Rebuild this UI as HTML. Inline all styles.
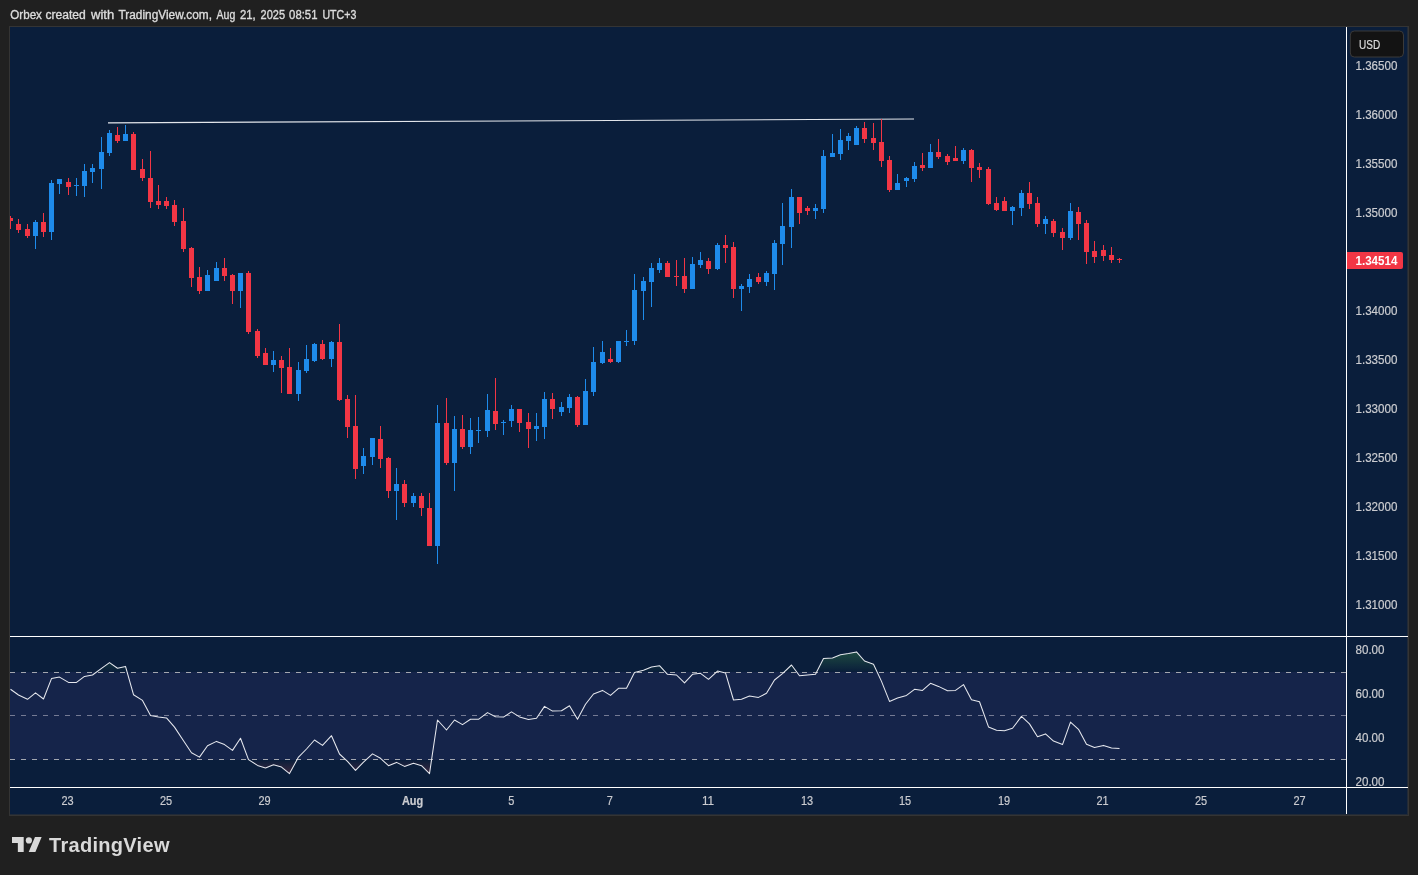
<!DOCTYPE html>
<html><head><meta charset="utf-8"><title>Chart</title>
<style>
html,body{margin:0;padding:0;background:#202020;}
body{width:1418px;height:875px;position:relative;overflow:hidden;font-family:"Liberation Sans",sans-serif;}
#hdr{position:absolute;left:10px;top:8px;font-size:12px;line-height:15px;color:#d6d6d6;white-space:nowrap;letter-spacing:0px;}
#frame{position:absolute;left:9px;top:26px;width:1400px;height:790px;box-sizing:border-box;background:#0a1e3b;border:1px solid #343434;box-shadow:inset -1px -1px 0 rgba(52,52,52,0.55);}
svg{position:absolute;left:0;top:0;will-change:transform;}
#hdr,#logo{will-change:transform;}
.ax{font-family:"Liberation Sans",sans-serif;font-size:11.6px;fill:#cbccd0;stroke:#cbccd0;stroke-width:0.2px;}
#logo{position:absolute;left:49px;top:833px;font-size:20px;line-height:24px;font-weight:bold;color:#d9d9d9;white-space:nowrap;letter-spacing:0.3px;}
</style></head><body>
<div id="frame"></div>
<svg width="1418" height="875" viewBox="0 0 1418 875">
<defs>
<linearGradient id="gob" gradientUnits="userSpaceOnUse" x1="0" y1="606" x2="0" y2="672"><stop offset="0" stop-color="#4caf50" stop-opacity="1"/><stop offset="1" stop-color="#4caf50" stop-opacity="0"/></linearGradient>
<linearGradient id="gos" gradientUnits="userSpaceOnUse" x1="0" y1="760" x2="0" y2="826"><stop offset="0" stop-color="#ff5252" stop-opacity="0"/><stop offset="1" stop-color="#ff5252" stop-opacity="1"/></linearGradient>
<clipPath id="ctop"><rect x="10" y="637" width="1336" height="35"/></clipPath>
<clipPath id="cbot"><rect x="10" y="760" width="1336" height="27"/></clipPath>
</defs>
<g shape-rendering="crispEdges">
<rect x="10" y="672" width="1336" height="88" fill="#15244a"/>
<g stroke="#a4a7b0" stroke-width="1" stroke-dasharray="5 6">
<line x1="10" y1="672.5" x2="1346" y2="672.5"/>
<line x1="10" y1="715.5" x2="1346" y2="715.5" stroke="#757b94"/>
<line x1="10" y1="759.5" x2="1346" y2="759.5"/>
</g>
</g>
<polygon points="10.5,672 10.5,689.3 18.5,695.0 27.5,699.3 35.5,692.9 43.5,699.0 51.5,678.6 59.5,677.1 68.5,682.4 76.5,682.4 84.5,676.4 92.5,675.0 101.5,668.3 109.5,662.6 117.5,668.3 125.5,666.4 133.5,694.7 142.5,700.4 150.5,715.4 158.5,717.1 166.5,717.9 174.5,727.1 183.5,740.7 191.5,752.7 199.5,757.1 207.5,745.7 216.5,741.4 224.5,744.6 232.5,750.4 240.5,738.3 248.5,759.6 257.5,765.4 265.5,767.9 273.5,764.7 281.5,767.1 289.5,773.6 298.5,757.1 306.5,749.0 314.5,740.0 322.5,745.4 331.5,735.7 339.5,754.0 347.5,761.4 355.5,770.4 363.5,762.1 372.5,753.9 380.5,758.3 388.5,765.7 396.5,762.4 404.5,766.4 413.5,763.3 421.5,765.7 429.5,773.6 437.5,720.0 446.5,730.0 454.5,720.0 462.5,724.6 470.5,719.3 478.5,719.3 487.5,712.6 495.5,716.7 503.5,717.1 511.5,711.9 519.5,716.9 528.5,719.6 536.5,718.3 544.5,706.4 552.5,711.1 561.5,710.7 569.5,705.7 577.5,719.3 585.5,704.3 593.5,694.0 602.5,690.4 610.5,695.4 618.5,688.3 626.5,688.3 634.5,672.6 643.5,670.3 651.5,666.9 659.5,665.7 667.5,674.3 676.5,675.0 684.5,682.9 692.5,674.3 700.5,673.3 708.5,679.3 717.5,671.1 725.5,672.9 733.5,700.0 741.5,699.3 749.5,696.0 758.5,697.4 766.5,693.3 774.5,680.0 782.5,673.6 791.5,665.0 799.5,675.7 807.5,675.0 815.5,674.3 823.5,658.6 832.5,657.9 840.5,654.7 848.5,653.6 856.5,651.9 864.5,661.0 873.5,664.3 881.5,681.4 889.5,701.4 897.5,697.9 906.5,695.4 914.5,689.3 922.5,690.4 930.5,683.3 938.5,686.4 947.5,690.7 955.5,690.4 963.5,684.6 971.5,699.7 979.5,701.7 988.5,726.9 996.5,730.3 1004.5,730.7 1012.5,728.3 1021.5,716.4 1029.5,723.9 1037.5,736.7 1045.5,733.9 1053.5,741.1 1062.5,744.6 1070.5,722.1 1078.5,729.3 1086.5,744.3 1094.5,747.4 1103.5,745.4 1111.5,747.9 1119.5,748.6 1119.5,672" fill="url(#gob)" clip-path="url(#ctop)"/>
<polygon points="10.5,760 10.5,689.3 18.5,695.0 27.5,699.3 35.5,692.9 43.5,699.0 51.5,678.6 59.5,677.1 68.5,682.4 76.5,682.4 84.5,676.4 92.5,675.0 101.5,668.3 109.5,662.6 117.5,668.3 125.5,666.4 133.5,694.7 142.5,700.4 150.5,715.4 158.5,717.1 166.5,717.9 174.5,727.1 183.5,740.7 191.5,752.7 199.5,757.1 207.5,745.7 216.5,741.4 224.5,744.6 232.5,750.4 240.5,738.3 248.5,759.6 257.5,765.4 265.5,767.9 273.5,764.7 281.5,767.1 289.5,773.6 298.5,757.1 306.5,749.0 314.5,740.0 322.5,745.4 331.5,735.7 339.5,754.0 347.5,761.4 355.5,770.4 363.5,762.1 372.5,753.9 380.5,758.3 388.5,765.7 396.5,762.4 404.5,766.4 413.5,763.3 421.5,765.7 429.5,773.6 437.5,720.0 446.5,730.0 454.5,720.0 462.5,724.6 470.5,719.3 478.5,719.3 487.5,712.6 495.5,716.7 503.5,717.1 511.5,711.9 519.5,716.9 528.5,719.6 536.5,718.3 544.5,706.4 552.5,711.1 561.5,710.7 569.5,705.7 577.5,719.3 585.5,704.3 593.5,694.0 602.5,690.4 610.5,695.4 618.5,688.3 626.5,688.3 634.5,672.6 643.5,670.3 651.5,666.9 659.5,665.7 667.5,674.3 676.5,675.0 684.5,682.9 692.5,674.3 700.5,673.3 708.5,679.3 717.5,671.1 725.5,672.9 733.5,700.0 741.5,699.3 749.5,696.0 758.5,697.4 766.5,693.3 774.5,680.0 782.5,673.6 791.5,665.0 799.5,675.7 807.5,675.0 815.5,674.3 823.5,658.6 832.5,657.9 840.5,654.7 848.5,653.6 856.5,651.9 864.5,661.0 873.5,664.3 881.5,681.4 889.5,701.4 897.5,697.9 906.5,695.4 914.5,689.3 922.5,690.4 930.5,683.3 938.5,686.4 947.5,690.7 955.5,690.4 963.5,684.6 971.5,699.7 979.5,701.7 988.5,726.9 996.5,730.3 1004.5,730.7 1012.5,728.3 1021.5,716.4 1029.5,723.9 1037.5,736.7 1045.5,733.9 1053.5,741.1 1062.5,744.6 1070.5,722.1 1078.5,729.3 1086.5,744.3 1094.5,747.4 1103.5,745.4 1111.5,747.9 1119.5,748.6 1119.5,760" fill="url(#gos)" clip-path="url(#cbot)"/>
<polyline points="10.5,689.3 18.5,695.0 27.5,699.3 35.5,692.9 43.5,699.0 51.5,678.6 59.5,677.1 68.5,682.4 76.5,682.4 84.5,676.4 92.5,675.0 101.5,668.3 109.5,662.6 117.5,668.3 125.5,666.4 133.5,694.7 142.5,700.4 150.5,715.4 158.5,717.1 166.5,717.9 174.5,727.1 183.5,740.7 191.5,752.7 199.5,757.1 207.5,745.7 216.5,741.4 224.5,744.6 232.5,750.4 240.5,738.3 248.5,759.6 257.5,765.4 265.5,767.9 273.5,764.7 281.5,767.1 289.5,773.6 298.5,757.1 306.5,749.0 314.5,740.0 322.5,745.4 331.5,735.7 339.5,754.0 347.5,761.4 355.5,770.4 363.5,762.1 372.5,753.9 380.5,758.3 388.5,765.7 396.5,762.4 404.5,766.4 413.5,763.3 421.5,765.7 429.5,773.6 437.5,720.0 446.5,730.0 454.5,720.0 462.5,724.6 470.5,719.3 478.5,719.3 487.5,712.6 495.5,716.7 503.5,717.1 511.5,711.9 519.5,716.9 528.5,719.6 536.5,718.3 544.5,706.4 552.5,711.1 561.5,710.7 569.5,705.7 577.5,719.3 585.5,704.3 593.5,694.0 602.5,690.4 610.5,695.4 618.5,688.3 626.5,688.3 634.5,672.6 643.5,670.3 651.5,666.9 659.5,665.7 667.5,674.3 676.5,675.0 684.5,682.9 692.5,674.3 700.5,673.3 708.5,679.3 717.5,671.1 725.5,672.9 733.5,700.0 741.5,699.3 749.5,696.0 758.5,697.4 766.5,693.3 774.5,680.0 782.5,673.6 791.5,665.0 799.5,675.7 807.5,675.0 815.5,674.3 823.5,658.6 832.5,657.9 840.5,654.7 848.5,653.6 856.5,651.9 864.5,661.0 873.5,664.3 881.5,681.4 889.5,701.4 897.5,697.9 906.5,695.4 914.5,689.3 922.5,690.4 930.5,683.3 938.5,686.4 947.5,690.7 955.5,690.4 963.5,684.6 971.5,699.7 979.5,701.7 988.5,726.9 996.5,730.3 1004.5,730.7 1012.5,728.3 1021.5,716.4 1029.5,723.9 1037.5,736.7 1045.5,733.9 1053.5,741.1 1062.5,744.6 1070.5,722.1 1078.5,729.3 1086.5,744.3 1094.5,747.4 1103.5,745.4 1111.5,747.9 1119.5,748.6" fill="none" stroke="#e6e8ee" stroke-width="1.05" stroke-linejoin="round"/>
<line x1="108" y1="122.9" x2="914" y2="119" stroke="#e3e6eb" stroke-width="1.15"/>
<g shape-rendering="crispEdges">
<rect x="10" y="216" width="1" height="13" fill="#f23645"/>
<rect x="10" y="218" width="3" height="3" fill="#f23645"/>
<rect x="18" y="219" width="1" height="14" fill="#f23645"/>
<rect x="16" y="224" width="5" height="6" fill="#f23645"/>
<rect x="27" y="224" width="1" height="14" fill="#f23645"/>
<rect x="25" y="229" width="5" height="7" fill="#f23645"/>
<rect x="35" y="220" width="1" height="29" fill="#1e8beb"/>
<rect x="33" y="222" width="5" height="14" fill="#1e8beb"/>
<rect x="43" y="213" width="1" height="24" fill="#f23645"/>
<rect x="41" y="222" width="5" height="10" fill="#f23645"/>
<rect x="51" y="180" width="1" height="60" fill="#1e8beb"/>
<rect x="49" y="183" width="5" height="49" fill="#1e8beb"/>
<rect x="59" y="179" width="1" height="15" fill="#1e8beb"/>
<rect x="57" y="179" width="5" height="5" fill="#1e8beb"/>
<rect x="68" y="178" width="1" height="17" fill="#f23645"/>
<rect x="66" y="182" width="5" height="5" fill="#f23645"/>
<rect x="76" y="178" width="1" height="18" fill="#1e8beb"/>
<rect x="74" y="185" width="5" height="1" fill="#1e8beb"/>
<rect x="84" y="164" width="1" height="33" fill="#1e8beb"/>
<rect x="82" y="171" width="5" height="15" fill="#1e8beb"/>
<rect x="92" y="164" width="1" height="19" fill="#1e8beb"/>
<rect x="90" y="168" width="5" height="4" fill="#1e8beb"/>
<rect x="101" y="137" width="1" height="52" fill="#1e8beb"/>
<rect x="99" y="152" width="5" height="17" fill="#1e8beb"/>
<rect x="109" y="130" width="1" height="26" fill="#1e8beb"/>
<rect x="107" y="133" width="5" height="20" fill="#1e8beb"/>
<rect x="117" y="127" width="1" height="16" fill="#f23645"/>
<rect x="115" y="135" width="5" height="6" fill="#f23645"/>
<rect x="125" y="125" width="1" height="16" fill="#1e8beb"/>
<rect x="123" y="134" width="5" height="7" fill="#1e8beb"/>
<rect x="133" y="132" width="1" height="38" fill="#f23645"/>
<rect x="131" y="134" width="5" height="36" fill="#f23645"/>
<rect x="142" y="159" width="1" height="22" fill="#f23645"/>
<rect x="140" y="169" width="5" height="9" fill="#f23645"/>
<rect x="150" y="151" width="1" height="57" fill="#f23645"/>
<rect x="148" y="178" width="5" height="24" fill="#f23645"/>
<rect x="158" y="185" width="1" height="24" fill="#f23645"/>
<rect x="156" y="201" width="5" height="4" fill="#f23645"/>
<rect x="166" y="197" width="1" height="12" fill="#f23645"/>
<rect x="164" y="201" width="5" height="5" fill="#f23645"/>
<rect x="174" y="200" width="1" height="26" fill="#f23645"/>
<rect x="172" y="205" width="5" height="17" fill="#f23645"/>
<rect x="183" y="208" width="1" height="44" fill="#f23645"/>
<rect x="181" y="221" width="5" height="28" fill="#f23645"/>
<rect x="191" y="247" width="1" height="40" fill="#f23645"/>
<rect x="189" y="248" width="5" height="30" fill="#f23645"/>
<rect x="199" y="267" width="1" height="27" fill="#f23645"/>
<rect x="197" y="277" width="5" height="14" fill="#f23645"/>
<rect x="207" y="270" width="1" height="21" fill="#1e8beb"/>
<rect x="205" y="275" width="5" height="16" fill="#1e8beb"/>
<rect x="216" y="262" width="1" height="19" fill="#1e8beb"/>
<rect x="214" y="268" width="5" height="13" fill="#1e8beb"/>
<rect x="224" y="258" width="1" height="23" fill="#f23645"/>
<rect x="222" y="268" width="5" height="8" fill="#f23645"/>
<rect x="232" y="274" width="1" height="30" fill="#f23645"/>
<rect x="230" y="275" width="5" height="16" fill="#f23645"/>
<rect x="240" y="273" width="1" height="35" fill="#1e8beb"/>
<rect x="238" y="273" width="5" height="18" fill="#1e8beb"/>
<rect x="248" y="271" width="1" height="63" fill="#f23645"/>
<rect x="246" y="273" width="5" height="59" fill="#f23645"/>
<rect x="257" y="329" width="1" height="29" fill="#f23645"/>
<rect x="255" y="331" width="5" height="25" fill="#f23645"/>
<rect x="265" y="348" width="1" height="17" fill="#f23645"/>
<rect x="263" y="353" width="5" height="12" fill="#f23645"/>
<rect x="273" y="351" width="1" height="21" fill="#1e8beb"/>
<rect x="271" y="360" width="5" height="5" fill="#1e8beb"/>
<rect x="281" y="356" width="1" height="37" fill="#f23645"/>
<rect x="279" y="360" width="5" height="8" fill="#f23645"/>
<rect x="289" y="348" width="1" height="46" fill="#f23645"/>
<rect x="287" y="367" width="5" height="27" fill="#f23645"/>
<rect x="298" y="362" width="1" height="39" fill="#1e8beb"/>
<rect x="296" y="370" width="5" height="24" fill="#1e8beb"/>
<rect x="306" y="345" width="1" height="28" fill="#1e8beb"/>
<rect x="304" y="359" width="5" height="12" fill="#1e8beb"/>
<rect x="314" y="343" width="1" height="19" fill="#1e8beb"/>
<rect x="312" y="344" width="5" height="17" fill="#1e8beb"/>
<rect x="322" y="340" width="1" height="20" fill="#f23645"/>
<rect x="320" y="344" width="5" height="15" fill="#f23645"/>
<rect x="331" y="341" width="1" height="26" fill="#1e8beb"/>
<rect x="329" y="342" width="5" height="17" fill="#1e8beb"/>
<rect x="339" y="324" width="1" height="77" fill="#f23645"/>
<rect x="337" y="342" width="5" height="58" fill="#f23645"/>
<rect x="347" y="395" width="1" height="43" fill="#f23645"/>
<rect x="345" y="399" width="5" height="28" fill="#f23645"/>
<rect x="355" y="395" width="1" height="84" fill="#f23645"/>
<rect x="353" y="426" width="5" height="43" fill="#f23645"/>
<rect x="363" y="448" width="1" height="26" fill="#1e8beb"/>
<rect x="361" y="456" width="5" height="10" fill="#1e8beb"/>
<rect x="372" y="438" width="1" height="27" fill="#1e8beb"/>
<rect x="370" y="438" width="5" height="19" fill="#1e8beb"/>
<rect x="380" y="426" width="1" height="42" fill="#f23645"/>
<rect x="378" y="439" width="5" height="20" fill="#f23645"/>
<rect x="388" y="457" width="1" height="41" fill="#f23645"/>
<rect x="386" y="458" width="5" height="33" fill="#f23645"/>
<rect x="396" y="468" width="1" height="52" fill="#1e8beb"/>
<rect x="394" y="484" width="5" height="7" fill="#1e8beb"/>
<rect x="404" y="480" width="1" height="27" fill="#f23645"/>
<rect x="402" y="484" width="5" height="19" fill="#f23645"/>
<rect x="413" y="493" width="1" height="14" fill="#1e8beb"/>
<rect x="411" y="496" width="5" height="7" fill="#1e8beb"/>
<rect x="421" y="493" width="1" height="23" fill="#f23645"/>
<rect x="419" y="496" width="5" height="12" fill="#f23645"/>
<rect x="429" y="493" width="1" height="53" fill="#f23645"/>
<rect x="427" y="508" width="5" height="38" fill="#f23645"/>
<rect x="437" y="405" width="1" height="159" fill="#1e8beb"/>
<rect x="435" y="423" width="5" height="123" fill="#1e8beb"/>
<rect x="446" y="398" width="1" height="67" fill="#f23645"/>
<rect x="444" y="423" width="5" height="40" fill="#f23645"/>
<rect x="454" y="416" width="1" height="75" fill="#1e8beb"/>
<rect x="452" y="429" width="5" height="34" fill="#1e8beb"/>
<rect x="462" y="415" width="1" height="34" fill="#f23645"/>
<rect x="460" y="429" width="5" height="18" fill="#f23645"/>
<rect x="470" y="418" width="1" height="36" fill="#1e8beb"/>
<rect x="468" y="430" width="5" height="17" fill="#1e8beb"/>
<rect x="478" y="417" width="1" height="26" fill="#1e8beb"/>
<rect x="476" y="430" width="5" height="1" fill="#1e8beb"/>
<rect x="487" y="394" width="1" height="43" fill="#1e8beb"/>
<rect x="485" y="410" width="5" height="21" fill="#1e8beb"/>
<rect x="495" y="378" width="1" height="52" fill="#f23645"/>
<rect x="493" y="411" width="5" height="13" fill="#f23645"/>
<rect x="503" y="420" width="1" height="15" fill="#1e8beb"/>
<rect x="501" y="422" width="5" height="1" fill="#1e8beb"/>
<rect x="511" y="405" width="1" height="22" fill="#1e8beb"/>
<rect x="509" y="409" width="5" height="12" fill="#1e8beb"/>
<rect x="519" y="409" width="1" height="23" fill="#f23645"/>
<rect x="517" y="409" width="5" height="14" fill="#f23645"/>
<rect x="528" y="413" width="1" height="35" fill="#f23645"/>
<rect x="526" y="422" width="5" height="7" fill="#f23645"/>
<rect x="536" y="413" width="1" height="28" fill="#1e8beb"/>
<rect x="534" y="426" width="5" height="3" fill="#1e8beb"/>
<rect x="544" y="392" width="1" height="47" fill="#1e8beb"/>
<rect x="542" y="399" width="5" height="28" fill="#1e8beb"/>
<rect x="552" y="393" width="1" height="26" fill="#f23645"/>
<rect x="550" y="399" width="5" height="10" fill="#f23645"/>
<rect x="561" y="402" width="1" height="14" fill="#1e8beb"/>
<rect x="559" y="407" width="5" height="5" fill="#1e8beb"/>
<rect x="569" y="394" width="1" height="19" fill="#1e8beb"/>
<rect x="567" y="397" width="5" height="11" fill="#1e8beb"/>
<rect x="577" y="396" width="1" height="31" fill="#f23645"/>
<rect x="575" y="397" width="5" height="28" fill="#f23645"/>
<rect x="585" y="379" width="1" height="46" fill="#1e8beb"/>
<rect x="583" y="391" width="5" height="34" fill="#1e8beb"/>
<rect x="593" y="347" width="1" height="49" fill="#1e8beb"/>
<rect x="591" y="362" width="5" height="30" fill="#1e8beb"/>
<rect x="602" y="341" width="1" height="23" fill="#1e8beb"/>
<rect x="600" y="352" width="5" height="11" fill="#1e8beb"/>
<rect x="610" y="348" width="1" height="15" fill="#f23645"/>
<rect x="608" y="359" width="5" height="3" fill="#f23645"/>
<rect x="618" y="341" width="1" height="22" fill="#1e8beb"/>
<rect x="616" y="341" width="5" height="21" fill="#1e8beb"/>
<rect x="626" y="330" width="1" height="16" fill="#1e8beb"/>
<rect x="624" y="341" width="5" height="1" fill="#1e8beb"/>
<rect x="634" y="274" width="1" height="71" fill="#1e8beb"/>
<rect x="632" y="290" width="5" height="51" fill="#1e8beb"/>
<rect x="643" y="277" width="1" height="43" fill="#1e8beb"/>
<rect x="641" y="281" width="5" height="10" fill="#1e8beb"/>
<rect x="651" y="263" width="1" height="44" fill="#1e8beb"/>
<rect x="649" y="268" width="5" height="14" fill="#1e8beb"/>
<rect x="659" y="258" width="1" height="15" fill="#1e8beb"/>
<rect x="657" y="263" width="5" height="7" fill="#1e8beb"/>
<rect x="667" y="261" width="1" height="16" fill="#f23645"/>
<rect x="665" y="263" width="5" height="14" fill="#f23645"/>
<rect x="676" y="260" width="1" height="26" fill="#f23645"/>
<rect x="674" y="276" width="5" height="1" fill="#f23645"/>
<rect x="684" y="258" width="1" height="35" fill="#f23645"/>
<rect x="682" y="276" width="5" height="13" fill="#f23645"/>
<rect x="692" y="257" width="1" height="32" fill="#1e8beb"/>
<rect x="690" y="264" width="5" height="25" fill="#1e8beb"/>
<rect x="700" y="252" width="1" height="16" fill="#1e8beb"/>
<rect x="698" y="260" width="5" height="5" fill="#1e8beb"/>
<rect x="708" y="258" width="1" height="16" fill="#f23645"/>
<rect x="706" y="261" width="5" height="8" fill="#f23645"/>
<rect x="717" y="243" width="1" height="27" fill="#1e8beb"/>
<rect x="715" y="245" width="5" height="24" fill="#1e8beb"/>
<rect x="725" y="235" width="1" height="28" fill="#f23645"/>
<rect x="723" y="245" width="5" height="3" fill="#f23645"/>
<rect x="733" y="242" width="1" height="56" fill="#f23645"/>
<rect x="731" y="247" width="5" height="42" fill="#f23645"/>
<rect x="741" y="284" width="1" height="27" fill="#1e8beb"/>
<rect x="739" y="286" width="5" height="3" fill="#1e8beb"/>
<rect x="749" y="274" width="1" height="19" fill="#1e8beb"/>
<rect x="747" y="279" width="5" height="8" fill="#1e8beb"/>
<rect x="758" y="273" width="1" height="11" fill="#f23645"/>
<rect x="756" y="277" width="5" height="5" fill="#f23645"/>
<rect x="766" y="271" width="1" height="15" fill="#1e8beb"/>
<rect x="764" y="273" width="5" height="9" fill="#1e8beb"/>
<rect x="774" y="240" width="1" height="50" fill="#1e8beb"/>
<rect x="772" y="243" width="5" height="31" fill="#1e8beb"/>
<rect x="782" y="203" width="1" height="62" fill="#1e8beb"/>
<rect x="780" y="226" width="5" height="18" fill="#1e8beb"/>
<rect x="791" y="189" width="1" height="59" fill="#1e8beb"/>
<rect x="789" y="197" width="5" height="30" fill="#1e8beb"/>
<rect x="799" y="197" width="1" height="27" fill="#f23645"/>
<rect x="797" y="197" width="5" height="16" fill="#f23645"/>
<rect x="807" y="206" width="1" height="9" fill="#f23645"/>
<rect x="805" y="208" width="5" height="3" fill="#f23645"/>
<rect x="815" y="204" width="1" height="15" fill="#1e8beb"/>
<rect x="813" y="208" width="5" height="3" fill="#1e8beb"/>
<rect x="823" y="150" width="1" height="63" fill="#1e8beb"/>
<rect x="821" y="156" width="5" height="53" fill="#1e8beb"/>
<rect x="832" y="134" width="1" height="23" fill="#1e8beb"/>
<rect x="830" y="153" width="5" height="4" fill="#1e8beb"/>
<rect x="840" y="129" width="1" height="31" fill="#1e8beb"/>
<rect x="838" y="140" width="5" height="14" fill="#1e8beb"/>
<rect x="848" y="133" width="1" height="17" fill="#1e8beb"/>
<rect x="846" y="136" width="5" height="5" fill="#1e8beb"/>
<rect x="856" y="126" width="1" height="19" fill="#1e8beb"/>
<rect x="854" y="128" width="5" height="17" fill="#1e8beb"/>
<rect x="864" y="122" width="1" height="21" fill="#f23645"/>
<rect x="862" y="128" width="5" height="11" fill="#f23645"/>
<rect x="873" y="123" width="1" height="27" fill="#f23645"/>
<rect x="871" y="138" width="5" height="5" fill="#f23645"/>
<rect x="881" y="119" width="1" height="48" fill="#f23645"/>
<rect x="879" y="142" width="5" height="19" fill="#f23645"/>
<rect x="889" y="156" width="1" height="36" fill="#f23645"/>
<rect x="887" y="160" width="5" height="30" fill="#f23645"/>
<rect x="897" y="174" width="1" height="16" fill="#1e8beb"/>
<rect x="895" y="183" width="5" height="7" fill="#1e8beb"/>
<rect x="906" y="177" width="1" height="10" fill="#1e8beb"/>
<rect x="904" y="178" width="5" height="3" fill="#1e8beb"/>
<rect x="914" y="162" width="1" height="20" fill="#1e8beb"/>
<rect x="912" y="166" width="5" height="13" fill="#1e8beb"/>
<rect x="922" y="153" width="1" height="18" fill="#f23645"/>
<rect x="920" y="165" width="5" height="3" fill="#f23645"/>
<rect x="930" y="144" width="1" height="24" fill="#1e8beb"/>
<rect x="928" y="152" width="5" height="16" fill="#1e8beb"/>
<rect x="938" y="139" width="1" height="20" fill="#f23645"/>
<rect x="936" y="152" width="5" height="5" fill="#f23645"/>
<rect x="947" y="154" width="1" height="11" fill="#f23645"/>
<rect x="945" y="156" width="5" height="6" fill="#f23645"/>
<rect x="955" y="146" width="1" height="15" fill="#f23645"/>
<rect x="953" y="158" width="5" height="3" fill="#f23645"/>
<rect x="963" y="148" width="1" height="16" fill="#1e8beb"/>
<rect x="961" y="150" width="5" height="11" fill="#1e8beb"/>
<rect x="971" y="149" width="1" height="33" fill="#f23645"/>
<rect x="969" y="150" width="5" height="18" fill="#f23645"/>
<rect x="979" y="163" width="1" height="15" fill="#f23645"/>
<rect x="977" y="167" width="5" height="3" fill="#f23645"/>
<rect x="988" y="167" width="1" height="38" fill="#f23645"/>
<rect x="986" y="169" width="5" height="35" fill="#f23645"/>
<rect x="996" y="197" width="1" height="14" fill="#f23645"/>
<rect x="994" y="203" width="5" height="7" fill="#f23645"/>
<rect x="1004" y="197" width="1" height="14" fill="#f23645"/>
<rect x="1002" y="201" width="5" height="10" fill="#f23645"/>
<rect x="1012" y="206" width="1" height="19" fill="#1e8beb"/>
<rect x="1010" y="207" width="5" height="4" fill="#1e8beb"/>
<rect x="1021" y="190" width="1" height="26" fill="#1e8beb"/>
<rect x="1019" y="193" width="5" height="15" fill="#1e8beb"/>
<rect x="1029" y="182" width="1" height="27" fill="#f23645"/>
<rect x="1027" y="193" width="5" height="11" fill="#f23645"/>
<rect x="1037" y="197" width="1" height="30" fill="#f23645"/>
<rect x="1035" y="203" width="5" height="21" fill="#f23645"/>
<rect x="1045" y="216" width="1" height="18" fill="#1e8beb"/>
<rect x="1043" y="219" width="5" height="5" fill="#1e8beb"/>
<rect x="1053" y="219" width="1" height="18" fill="#f23645"/>
<rect x="1051" y="221" width="5" height="12" fill="#f23645"/>
<rect x="1062" y="228" width="1" height="22" fill="#f23645"/>
<rect x="1060" y="232" width="5" height="6" fill="#f23645"/>
<rect x="1070" y="203" width="1" height="37" fill="#1e8beb"/>
<rect x="1068" y="211" width="5" height="27" fill="#1e8beb"/>
<rect x="1078" y="207" width="1" height="33" fill="#f23645"/>
<rect x="1076" y="212" width="5" height="12" fill="#f23645"/>
<rect x="1086" y="220" width="1" height="44" fill="#f23645"/>
<rect x="1084" y="223" width="5" height="29" fill="#f23645"/>
<rect x="1094" y="241" width="1" height="22" fill="#f23645"/>
<rect x="1092" y="251" width="5" height="6" fill="#f23645"/>
<rect x="1103" y="245" width="1" height="16" fill="#f23645"/>
<rect x="1101" y="250" width="5" height="6" fill="#f23645"/>
<rect x="1111" y="247" width="1" height="16" fill="#f23645"/>
<rect x="1109" y="255" width="5" height="5" fill="#f23645"/>
<rect x="1119" y="258" width="1" height="5" fill="#f23645"/>
<rect x="1117" y="259" width="5" height="1" fill="#f23645"/>
<rect x="10" y="636" width="1398" height="1" fill="#ffffff"/>
<rect x="10" y="787" width="1398" height="1" fill="#ffffff"/>
<rect x="1346" y="27" width="1" height="787" fill="#ffffff"/>
</g>
<rect x="1350.3" y="31" width="53.2" height="26" rx="4" ry="4" fill="#131313" stroke="#3a3a3a" stroke-width="1"/>
<text x="1359" y="48.6" class="ax" style="fill:#dddddd;stroke:#dddddd;font-size:12.3px" textLength="21.2" lengthAdjust="spacingAndGlyphs">USD</text>
<text y="19" style="font-family:'Liberation Sans',sans-serif;font-size:12px;fill:#dcdcdc;stroke:#dcdcdc;stroke-width:0.35px"><tspan x="10.3" textLength="31.6" lengthAdjust="spacingAndGlyphs">Orbex</tspan> <tspan x="45.4" textLength="40.4" lengthAdjust="spacingAndGlyphs">created</tspan> <tspan x="91" textLength="23.2" lengthAdjust="spacingAndGlyphs">with</tspan> <tspan x="118.5" textLength="93.5" lengthAdjust="spacingAndGlyphs">TradingView.com,</tspan> <tspan x="216.6" textLength="18.7" lengthAdjust="spacingAndGlyphs">Aug</tspan> <tspan x="239.9" textLength="15.8" lengthAdjust="spacingAndGlyphs">21,</tspan> <tspan x="260.6" textLength="24.4" lengthAdjust="spacingAndGlyphs">2025</tspan> <tspan x="289.1" textLength="28.4" lengthAdjust="spacingAndGlyphs">08:51</tspan> <tspan x="322.4" textLength="33.9" lengthAdjust="spacingAndGlyphs">UTC+3</tspan></text>
<text x="1355.5" y="70.2" class="ax" style="font-size:12.9px" textLength="41.92" lengthAdjust="spacingAndGlyphs">1.36500</text><text x="1355.5" y="119.15" class="ax" style="font-size:12.9px" textLength="41.92" lengthAdjust="spacingAndGlyphs">1.36000</text><text x="1355.5" y="168.1" class="ax" style="font-size:12.9px" textLength="41.92" lengthAdjust="spacingAndGlyphs">1.35500</text><text x="1355.5" y="217.05" class="ax" style="font-size:12.9px" textLength="41.92" lengthAdjust="spacingAndGlyphs">1.35000</text><text x="1355.5" y="314.95" class="ax" style="font-size:12.9px" textLength="41.92" lengthAdjust="spacingAndGlyphs">1.34000</text><text x="1355.5" y="363.9" class="ax" style="font-size:12.9px" textLength="41.92" lengthAdjust="spacingAndGlyphs">1.33500</text><text x="1355.5" y="412.85" class="ax" style="font-size:12.9px" textLength="41.92" lengthAdjust="spacingAndGlyphs">1.33000</text><text x="1355.5" y="461.8" class="ax" style="font-size:12.9px" textLength="41.92" lengthAdjust="spacingAndGlyphs">1.32500</text><text x="1355.5" y="510.75" class="ax" style="font-size:12.9px" textLength="41.92" lengthAdjust="spacingAndGlyphs">1.32000</text><text x="1355.5" y="559.7" class="ax" style="font-size:12.9px" textLength="41.92" lengthAdjust="spacingAndGlyphs">1.31500</text><text x="1355.5" y="608.65" class="ax" style="font-size:12.9px" textLength="41.92" lengthAdjust="spacingAndGlyphs">1.31000</text><text x="1355.5" y="653.9" class="ax" style="font-size:12.9px" textLength="29.02" lengthAdjust="spacingAndGlyphs">80.00</text><text x="1355.5" y="697.9" class="ax" style="font-size:12.9px" textLength="29.02" lengthAdjust="spacingAndGlyphs">60.00</text><text x="1355.5" y="741.9" class="ax" style="font-size:12.9px" textLength="29.02" lengthAdjust="spacingAndGlyphs">40.00</text><text x="1355.5" y="785.9" class="ax" style="font-size:12.9px" textLength="29.02" lengthAdjust="spacingAndGlyphs">20.00</text><text x="61.41" y="805" class="ax" style="font-size:12.9px" textLength="12.19" lengthAdjust="spacingAndGlyphs">23</text><text x="159.91" y="805" class="ax" style="font-size:12.9px" textLength="12.19" lengthAdjust="spacingAndGlyphs">25</text><text x="258.4" y="805" class="ax" style="font-size:12.9px" textLength="12.19" lengthAdjust="spacingAndGlyphs">29</text><text x="401.95" y="804.9" class="ax" style="font-size:12px;font-weight:bold" textLength="21.3" lengthAdjust="spacingAndGlyphs">Aug</text><text x="508.25" y="805" class="ax" style="font-size:12.9px" textLength="6.1" lengthAdjust="spacingAndGlyphs">5</text><text x="606.75" y="805" class="ax" style="font-size:12.9px" textLength="6.1" lengthAdjust="spacingAndGlyphs">7</text><text x="701.9" y="805" class="ax" style="font-size:12.9px" textLength="12.19" lengthAdjust="spacingAndGlyphs">11</text><text x="800.9" y="805" class="ax" style="font-size:12.9px" textLength="12.19" lengthAdjust="spacingAndGlyphs">13</text><text x="898.9" y="805" class="ax" style="font-size:12.9px" textLength="12.19" lengthAdjust="spacingAndGlyphs">15</text><text x="997.9" y="805" class="ax" style="font-size:12.9px" textLength="12.19" lengthAdjust="spacingAndGlyphs">19</text><text x="1096.4" y="805" class="ax" style="font-size:12.9px" textLength="12.19" lengthAdjust="spacingAndGlyphs">21</text><text x="1194.9" y="805" class="ax" style="font-size:12.9px" textLength="12.19" lengthAdjust="spacingAndGlyphs">25</text><text x="1293.4" y="805" class="ax" style="font-size:12.9px" textLength="12.19" lengthAdjust="spacingAndGlyphs">27</text>
<path d="M1347 252h54a2 2 0 0 1 2 2v13a2 2 0 0 1 -2 2h-54z" fill="#f23645"/>
<text x="1355.5" y="264.9" class="ax" style="fill:#ffffff;font-weight:bold;font-size:12.9px;stroke:none" textLength="41.92" lengthAdjust="spacingAndGlyphs">1.34514</text>
<g transform="translate(12,833.7) scale(0.835)" fill="#d9d9d9"><path d="M14 22H7V11H0V4h14v18zM28 22h-8l7.5-18h8L28 22z"/><circle cx="20.2" cy="8" r="3.7"/></g>
</svg>
<div id="logo">TradingView</div>
</body></html>
